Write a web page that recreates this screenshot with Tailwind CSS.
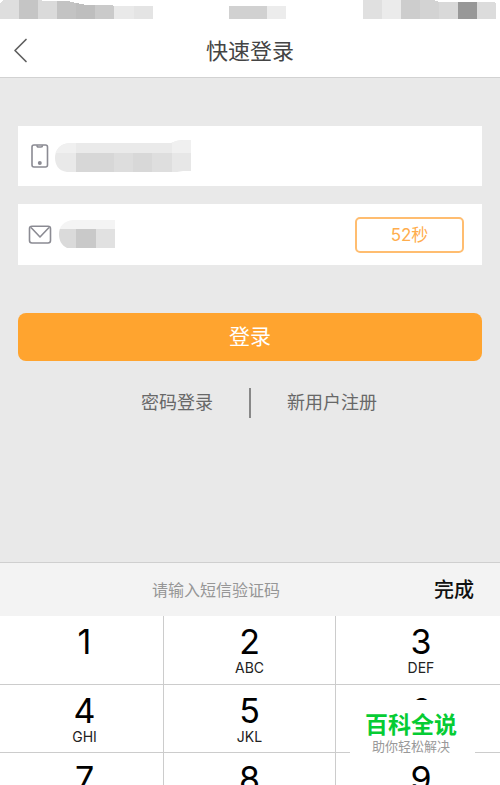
<!DOCTYPE html>
<html lang="zh-CN">
<head>
<meta charset="utf-8">
<meta name="viewport" content="width=device-width, initial-scale=1">
<title>快速登录</title>
<script src="https://cdn.jsdelivr.net/npm/@tailwindcss/browser@4"></script>
</head>
<body class="relative flex h-screen flex-col overflow-hidden bg-[#e9e9e9] font-['Inter','Noto_Sans_CJK_SC',sans-serif]">
  <header class="shrink-0 border-b border-[#d2d2d2] bg-white">
    <div class="flex h-6 items-start justify-between pr-1" aria-hidden="true">
      <svg class="h-6 w-[153px]" viewBox="0 0 153 24" shape-rendering="crispEdges">
        <path d="M0 3L4 0H19V19H0Z" fill="#dedede"/><path d="M19 0H38V19H19Z" fill="#c5c5c5"/><path d="M38 0L46 1H57V19H38Z" fill="#dadada"/><path d="M57 1H68L76 3V19H57Z" fill="#c3c3c3"/><path d="M76 3L86 5H95V19H76Z" fill="#bebebe"/><path d="M95 5H112L114 6V19H95Z" fill="#cacaca"/><path d="M114 6H134V19H114Z" fill="#e9e9e9"/><path d="M134 6H153V19H134Z" fill="#e4e4e4"/>
      </svg>
      <svg class="h-6 w-[57px]" viewBox="0 0 57 24" shape-rendering="crispEdges">
        <path d="M0 6H38V19H0Z" fill="#d1d1d1"/><path d="M38 6H57V19H38Z" fill="#ececec"/>
      </svg>
      <svg class="h-6 w-[134px]" viewBox="0 0 134 24" shape-rendering="crispEdges">
        <path d="M1 0H20V19H1Z" fill="#e0e0e0"/><path d="M20 0H39V19H20Z" fill="#ebebeb"/><path d="M39 0H58V19H39Z" fill="#cdcdcd"/><path d="M58 0H72L77 2V19H58Z" fill="#d3d3d3"/><path d="M77 2H96V19H77Z" fill="#d9d9d9"/><path d="M96 2H115V19H96Z" fill="#989898"/><path d="M115 2H132L134 3V19H115Z" fill="#dcdcdc"/>
      </svg>
    </div>
    <div class="grid h-[53px] grid-cols-[48px_1fr_48px] items-center">
      <button type="button" aria-label="返回" class="flex h-full items-center pl-3">
        <svg class="h-7 w-4" viewBox="0 0 16 28" fill="none" stroke="#606060" stroke-width="1.7" stroke-linecap="round" stroke-linejoin="round"><path d="M14 2.500L3 13.500L14 24.500"/></svg>
      </button>
      <h1 class="text-center text-[22px] leading-8 text-[#444444]">快速登录</h1>
    </div>
  </header>

  <main class="min-h-[484px] shrink-0 px-[18px] pt-12">
    <form>
      <div class="flex h-[60px] items-center bg-white pl-3">
        <label for="phone" class="mr-1.5 flex">
          <svg role="img" aria-label="手机号" class="h-6 w-[19px]" viewBox="0 0 19 24" fill="none" stroke="#8b8b93" stroke-width="1.6"><rect x="2" y="1" width="15.500" height="22" rx="2"/><path d="M7 1.200Q7 3 8.500 3H11Q12.500 3 12.500 1.200"/><circle cx="9.800" cy="19" r="2" fill="#8b8b93" stroke="none"/></svg>
        </label>
        <div class="relative h-full flex-1">
          <input id="phone" type="tel" class="h-full w-full bg-transparent text-base outline-none">
          <svg class="pointer-events-none absolute left-0 top-3.5 h-8 w-[136px]" viewBox="0 0 136 32" aria-hidden="true">
            <clipPath id="phoneMask"><path d="M14 3H116Q122 0 128 0H136V31H128L122 32H12C3 31 0 24 0 18C0 11 4 4 14 3Z"/></clipPath>
            <g clip-path="url(#phoneMask)" shape-rendering="crispEdges"><path d="M0 0H136V13H0Z" fill="#eaeaea"/><path d="M0 0H21V13H0ZM117 0H136V13H117Z" fill="#f0f0f0"/><path d="M0 13H21V32H0Z" fill="#e9e9e9"/><path d="M21 13H59V32H21Z" fill="#d7d7d7"/><path d="M59 13H78V32H59Z" fill="#dddddd"/><path d="M78 13H97V32H78Z" fill="#d8d8d8"/><path d="M97 13H117V32H97Z" fill="#dedede"/><path d="M117 13H136V32H117Z" fill="#e7e7e7"/></g>
          </svg>
        </div>
      </div>

      <div class="mt-[18px] flex h-[61px] items-center bg-white pl-2.5 pr-[18px]">
        <label for="code" class="mr-[7px] flex">
          <svg role="img" aria-label="短信验证码" class="h-5 w-6" viewBox="0 0 24 20" fill="none" stroke="#8b8b93" stroke-width="1.600" stroke-linejoin="round"><rect x="1.500" y="1.300" width="21" height="16.700" rx="2.500"/><path d="M3 2.500L12 12L21 2.500"/></svg>
        </label>
        <div class="relative h-full flex-1">
          <input id="code" type="text" inputmode="numeric" class="h-full w-full bg-transparent text-base outline-none">
          <svg class="pointer-events-none absolute left-0 top-4 h-7 w-14" viewBox="0 0 56 28" aria-hidden="true">
            <clipPath id="codeMask"><path d="M14 0H56V28H8C2 25 0 20 0 14C0 6 5 1 14 0Z"/></clipPath>
            <g clip-path="url(#codeMask)" shape-rendering="crispEdges"><path d="M0 0H56V9H0Z" fill="#f4f4f4"/><path d="M0 9H17V28H0Z" fill="#dadada"/><path d="M17 9H37V28H17Z" fill="#c9c9c9"/><path d="M37 9H56V28H37Z" fill="#e1e1e1"/></g>
          </svg>
        </div>
        <button type="button" class="h-9 w-[109px] rounded-[5px] border-2 border-[#ffbd70] text-[17px] leading-6 text-[#ffad4d]">52秒</button>
      </div>

      <button type="submit" class="mt-12 h-12 w-full rounded-lg bg-[#ffa42f] text-[21px] leading-8 text-white">登录</button>
    </form>

    <nav class="mt-[26px] grid grid-cols-[1fr_2px_1fr] items-center text-lg leading-8 text-[#686868]">
      <a href="#" class="justify-self-end pr-9">密码登录</a>
      <span class="h-[30px] bg-[#888888]"></span>
      <a href="#" class="justify-self-start pl-9">新用户注册</a>
    </nav>
  </main>

  <section class="shrink-0 bg-white" aria-label="数字键盘">
    <div class="flex h-[54px] items-center justify-between border-t border-[#cfcfcf] bg-[#f3f3f3] pl-[152px] pr-[26px]">
      <p class="text-base leading-6 text-[#969696]">请输入短信验证码</p>
      <button type="button" class="text-xl font-medium leading-8 text-[#111111]">完成</button>
    </div>
    <div class="grid grid-cols-[164fr_172fr_164fr] text-black">
      <button type="button" class="flex h-[69px] flex-col items-center border-b border-r border-[#cccccc] pl-1.5 pt-2"><span class="text-[34px] leading-9">1</span></button>
      <button type="button" class="flex h-[69px] flex-col items-center border-b border-r border-[#cccccc] pt-2"><span class="text-[34px] leading-9">2</span><span class="text-sm leading-4 text-[#222222]">ABC</span></button>
      <button type="button" class="flex h-[69px] flex-col items-center border-b border-[#cccccc] pl-1.5 pt-2"><span class="text-[34px] leading-9">3</span><span class="text-sm leading-4 text-[#222222]">DEF</span></button>
      <button type="button" class="flex h-[68px] flex-col items-center border-b border-r border-[#cccccc] pl-1.5 pt-2"><span class="text-[34px] leading-9">4</span><span class="text-sm leading-4 text-[#222222]">GHI</span></button>
      <button type="button" class="flex h-[68px] flex-col items-center border-b border-r border-[#cccccc] pt-2"><span class="text-[34px] leading-9">5</span><span class="text-sm leading-4 text-[#222222]">JKL</span></button>
      <button type="button" class="flex h-[68px] flex-col items-center border-b border-[#cccccc] pl-1.5 pt-2"><span class="text-[34px] leading-9">6</span></button>
      <button type="button" class="flex h-[68px] flex-col items-center border-r border-[#cccccc] pl-1.5 pt-2"><span class="text-[34px] leading-9">7</span></button>
      <button type="button" class="flex h-[68px] flex-col items-center border-r border-[#cccccc] pt-2"><span class="text-[34px] leading-9">8</span></button>
      <button type="button" class="flex h-[68px] flex-col items-center pl-1.5 pt-2"><span class="text-[34px] leading-9">9</span></button>
    </div>
  </section>

  <aside class="absolute bottom-[29px] right-[25px] flex h-14 w-[125px] flex-col items-center bg-white pr-[3px] pt-3">
    <strong class="text-[23px] font-bold leading-[26px] text-[#06cc34]">百科全说</strong>
    <span class="text-[13px] leading-4 text-[#999999]">助你轻松解决</span>
  </aside>
</body>
</html>
